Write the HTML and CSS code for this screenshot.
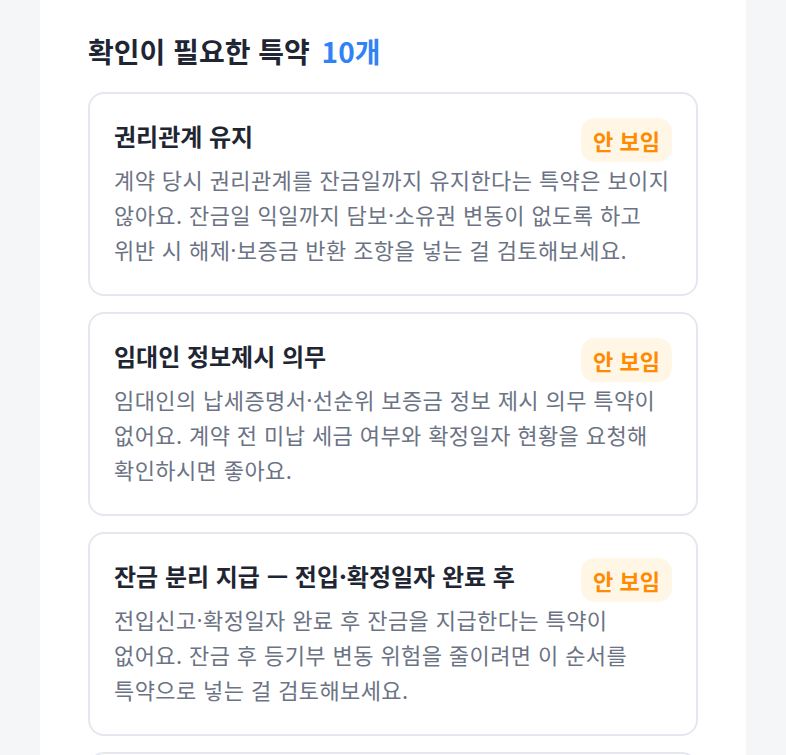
FILE: index.html
```html
<!DOCTYPE html>
<html lang="ko">
<head>
<meta charset="utf-8">
<link rel="stylesheet" href="styles.css">
</head>
<body>
<div class="panel">
  <h2 class="heading">확인이 필요한 특약 <span class="count">10개</span></h2>
  <div class="list">
    <div class="card">
      <div class="card-head">
        <div class="card-title">권리관계 유지</div>
        <span class="badge">안 보임</span>
      </div>
      <p class="card-desc">계약 당시 권리관계를 잔금일까지 유지한다는 특약은 보이지<br>않아요. 잔금일 익일까지 담보·소유권 변동이 없도록 하고<br>위반 시 해제·보증금 반환 조항을 넣는 걸 검토해보세요.</p>
    </div>
    <div class="card">
      <div class="card-head">
        <div class="card-title">임대인 정보제시 의무</div>
        <span class="badge">안 보임</span>
      </div>
      <p class="card-desc">임대인의 납세증명서·선순위 보증금 정보 제시 의무 특약이<br>없어요. 계약 전 미납 세금 여부와 확정일자 현황을 요청해<br>확인하시면 좋아요.</p>
    </div>
    <div class="card">
      <div class="card-head">
        <div class="card-title">잔금 분리 지급 — 전입·확정일자 완료 후</div>
        <span class="badge">안 보임</span>
      </div>
      <p class="card-desc">전입신고·확정일자 완료 후 잔금을 지급한다는 특약이<br>없어요. 잔금 후 등기부 변동 위험을 줄이려면 이 순서를<br>특약으로 넣는 걸 검토해보세요.</p>
    </div>
    <div class="card card-empty"></div>
  </div>
</div>
</body>
</html>
```
FILE: styles.css
```css
* { box-sizing: border-box; }
html, body { margin: 0; padding: 0; }
body {
  background: #f5f6f8;
  font-family: "Noto Sans CJK KR", "Noto Sans", sans-serif;
  height: 755px;
  overflow: hidden;
}
.panel {
  margin-left: 40px;
  width: 706px;
  min-height: 900px;
  background: #ffffff;
  padding: 31px 48px 0 48px;
}
.heading {
  margin: 0;
  font-size: 28px;
  line-height: 40px;
  font-weight: 700;
  color: #1f2633;
}
.count {
  color: #3182f6;
  margin-left: 4px;
}
.list {
  margin-top: 21px;
  display: flex;
  flex-direction: column;
  gap: 16px;
}
.card {
  border: 2px solid #e4e8ee;
  border-radius: 16px;
  padding: 24px 24px 27px 24px;
}
.card-empty {
  height: 204px;
}
.card-head {
  display: flex;
  justify-content: space-between;
  align-items: flex-start;
  height: 44px;
}
.card-title {
  font-size: 24px;
  line-height: 36px;
  font-weight: 700;
  color: #1f2633;
  white-space: nowrap;
}
.badge {
  background: #fff6e6;
  color: #ff8a00;
  font-size: 22px;
  font-weight: 700;
  border-radius: 14px;
  height: 44px;
  line-height: 44px;
  padding: 0 12px;
  white-space: nowrap;
}
.card-desc {
  margin: 0;
  font-size: 22px;
  line-height: 35px;
  color: #6b7384;
  letter-spacing: 0.4px;
  white-space: nowrap;
}
```
